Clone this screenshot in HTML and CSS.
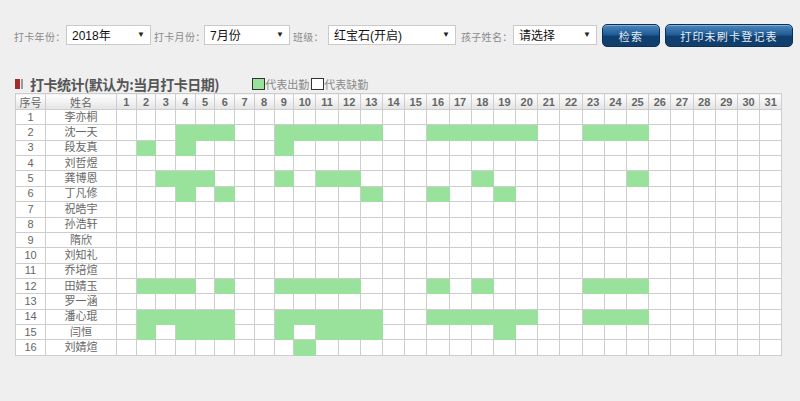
FILE: index.html
```html
<!DOCTYPE html>
<html lang="zh-CN">
<head>
<meta charset="utf-8">
<title>打卡统计</title>
<link rel="stylesheet" href="styles.css">
</head>
<body>
<div class="page">
  <form class="toolbar">
    <label class="lbl l-year">打卡年份：</label>
    <div class="select w-year"><span>2018年</span><i>▼</i></div>
    <label class="lbl l-month">打卡月份：</label>
    <div class="select w-month"><span>7月份</span><i>▼</i></div>
    <label class="lbl l-class">班级：</label>
    <div class="select w-class"><span>红宝石(开启)</span><i>▼</i></div>
    <label class="lbl l-child">孩子姓名：</label>
    <div class="select w-child"><span>请选择</span><i>▼</i></div>
    <button type="button" class="btn btn-search">检索</button>
    <button type="button" class="btn btn-print">打印未刷卡登记表</button>
  </form>

  <div class="title-bar">
    <span class="marker"><b></b><s></s></span>
    <h2 class="title">打卡统计(默认为:当月打卡日期)</h2>
    <span class="legend"><span class="box on"></span>代表出勤<span class="box off"></span>代表缺勤</span>
  </div>

  <table class="grid">
    <colgroup>
      <col class="c-no"><col class="c-name">
      <col class="c-d1"><col class="c-d1"><col class="c-d1"><col class="c-d1"><col class="c-d1"><col class="c-d1"><col class="c-d1"><col class="c-d1"><col class="c-d1">
      <col class="c-d2"><col class="c-d2"><col class="c-d2"><col class="c-d2"><col class="c-d2"><col class="c-d2"><col class="c-d2"><col class="c-d2"><col class="c-d2"><col class="c-d2"><col class="c-d2">
      <col class="c-d2"><col class="c-d2"><col class="c-d2"><col class="c-d2"><col class="c-d2"><col class="c-d2"><col class="c-d2"><col class="c-d2"><col class="c-d2"><col class="c-d2"><col class="c-d2">
    </colgroup>
    <thead>
      <tr><th class="cn">序号</th><th class="cn">姓名</th><th>1</th><th>2</th><th>3</th><th>4</th><th>5</th><th>6</th><th>7</th><th>8</th><th>9</th><th>10</th><th>11</th><th>12</th><th>13</th><th>14</th><th>15</th><th>16</th><th>17</th><th>18</th><th>19</th><th>20</th><th>21</th><th>22</th><th>23</th><th>24</th><th>25</th><th>26</th><th>27</th><th>28</th><th>29</th><th>30</th><th>31</th></tr>
    </thead>
    <tbody>
      <tr><td>1</td><td>李亦桐</td><td></td><td></td><td></td><td></td><td></td><td></td><td></td><td></td><td></td><td></td><td></td><td></td><td></td><td></td><td></td><td></td><td></td><td></td><td></td><td></td><td></td><td></td><td></td><td></td><td></td><td></td><td></td><td></td><td></td><td></td><td></td></tr>
      <tr><td>2</td><td>沈一天</td><td></td><td></td><td></td><td class="g"></td><td class="g"></td><td class="g"></td><td></td><td></td><td class="g"></td><td class="g"></td><td class="g"></td><td class="g"></td><td class="g"></td><td></td><td></td><td class="g"></td><td class="g"></td><td class="g"></td><td class="g"></td><td class="g"></td><td></td><td></td><td class="g"></td><td class="g"></td><td class="g"></td><td></td><td></td><td></td><td></td><td></td><td></td></tr>
      <tr><td>3</td><td>段友真</td><td></td><td class="g"></td><td></td><td class="g"></td><td></td><td></td><td></td><td></td><td class="g"></td><td></td><td></td><td></td><td></td><td></td><td></td><td></td><td></td><td></td><td></td><td></td><td></td><td></td><td></td><td></td><td></td><td></td><td></td><td></td><td></td><td></td><td></td></tr>
      <tr><td>4</td><td>刘哲煜</td><td></td><td></td><td></td><td></td><td></td><td></td><td></td><td></td><td></td><td></td><td></td><td></td><td></td><td></td><td></td><td></td><td></td><td></td><td></td><td></td><td></td><td></td><td></td><td></td><td></td><td></td><td></td><td></td><td></td><td></td><td></td></tr>
      <tr><td>5</td><td>龚博恩</td><td></td><td></td><td class="g"></td><td class="g"></td><td class="g"></td><td></td><td></td><td></td><td class="g"></td><td></td><td class="g"></td><td class="g"></td><td></td><td></td><td></td><td></td><td></td><td class="g"></td><td></td><td></td><td></td><td></td><td></td><td></td><td class="g"></td><td></td><td></td><td></td><td></td><td></td><td></td></tr>
      <tr><td>6</td><td>丁凡修</td><td></td><td></td><td></td><td class="g"></td><td></td><td class="g"></td><td></td><td></td><td></td><td></td><td></td><td></td><td class="g"></td><td></td><td></td><td class="g"></td><td></td><td></td><td class="g"></td><td></td><td></td><td></td><td></td><td></td><td></td><td></td><td></td><td></td><td></td><td></td><td></td></tr>
      <tr><td>7</td><td>祝皓宇</td><td></td><td></td><td></td><td></td><td></td><td></td><td></td><td></td><td></td><td></td><td></td><td></td><td></td><td></td><td></td><td></td><td></td><td></td><td></td><td></td><td></td><td></td><td></td><td></td><td></td><td></td><td></td><td></td><td></td><td></td><td></td></tr>
      <tr><td>8</td><td>孙浩轩</td><td></td><td></td><td></td><td></td><td></td><td></td><td></td><td></td><td></td><td></td><td></td><td></td><td></td><td></td><td></td><td></td><td></td><td></td><td></td><td></td><td></td><td></td><td></td><td></td><td></td><td></td><td></td><td></td><td></td><td></td><td></td></tr>
      <tr><td>9</td><td>隋欣</td><td></td><td></td><td></td><td></td><td></td><td></td><td></td><td></td><td></td><td></td><td></td><td></td><td></td><td></td><td></td><td></td><td></td><td></td><td></td><td></td><td></td><td></td><td></td><td></td><td></td><td></td><td></td><td></td><td></td><td></td><td></td></tr>
      <tr><td>10</td><td>刘知礼</td><td></td><td></td><td></td><td></td><td></td><td></td><td></td><td></td><td></td><td></td><td></td><td></td><td></td><td></td><td></td><td></td><td></td><td></td><td></td><td></td><td></td><td></td><td></td><td></td><td></td><td></td><td></td><td></td><td></td><td></td><td></td></tr>
      <tr><td>11</td><td>乔培煊</td><td></td><td></td><td></td><td></td><td></td><td></td><td></td><td></td><td></td><td></td><td></td><td></td><td></td><td></td><td></td><td></td><td></td><td></td><td></td><td></td><td></td><td></td><td></td><td></td><td></td><td></td><td></td><td></td><td></td><td></td><td></td></tr>
      <tr><td>12</td><td>田婧玉</td><td></td><td class="g"></td><td class="g"></td><td class="g"></td><td></td><td class="g"></td><td></td><td></td><td class="g"></td><td class="g"></td><td class="g"></td><td class="g"></td><td></td><td></td><td></td><td class="g"></td><td></td><td class="g"></td><td></td><td></td><td></td><td></td><td class="g"></td><td class="g"></td><td class="g"></td><td></td><td></td><td></td><td></td><td></td><td></td></tr>
      <tr><td>13</td><td>罗一涵</td><td></td><td></td><td></td><td></td><td></td><td></td><td></td><td></td><td></td><td></td><td></td><td></td><td></td><td></td><td></td><td></td><td></td><td></td><td></td><td></td><td></td><td></td><td></td><td></td><td></td><td></td><td></td><td></td><td></td><td></td><td></td></tr>
      <tr><td>14</td><td>潘心琨</td><td></td><td class="g"></td><td class="g"></td><td class="g"></td><td class="g"></td><td class="g"></td><td></td><td></td><td class="g"></td><td class="g"></td><td class="g"></td><td class="g"></td><td class="g"></td><td></td><td></td><td class="g"></td><td class="g"></td><td class="g"></td><td class="g"></td><td class="g"></td><td></td><td></td><td class="g"></td><td class="g"></td><td class="g"></td><td></td><td></td><td></td><td></td><td></td><td></td></tr>
      <tr><td>15</td><td>闫恒</td><td></td><td class="g"></td><td></td><td class="g"></td><td class="g"></td><td class="g"></td><td></td><td></td><td class="g"></td><td></td><td class="g"></td><td class="g"></td><td class="g"></td><td></td><td></td><td></td><td></td><td></td><td class="g"></td><td></td><td></td><td></td><td></td><td></td><td></td><td></td><td></td><td></td><td></td><td></td><td></td></tr>
      <tr><td>16</td><td>刘婧煊</td><td></td><td></td><td></td><td></td><td></td><td></td><td></td><td></td><td></td><td class="g"></td><td></td><td></td><td></td><td></td><td></td><td></td><td></td><td></td><td></td><td></td><td></td><td></td><td></td><td></td><td></td><td></td><td></td><td></td><td></td><td></td><td></td></tr>
    </tbody>
  </table>
</div>
</body>
</html>
```

FILE: styles.css
```css
html, body {
  margin: 0;
  padding: 0;
  background: #efefef;
  font-family: "Liberation Sans", "Noto Sans CJK SC", sans-serif;
}

.page {
  padding: 24px 0 0 14px;
}

/* ---------- toolbar ---------- */
.toolbar {
  display: flex;
  align-items: center;
  height: 23px;
}
.toolbar > * { flex-shrink: 0; }

.lbl {
  box-sizing: border-box;
  font-size: 10px;
  letter-spacing: 0.3px;
  color: #8a8a8a;
  white-space: nowrap;
  margin-top: 1px;
}
.l-year  { width: 52px; }
.l-month { width: 50px; margin-left: 3px; }
.l-class { width: 35px; margin-left: 3px; }
.l-child { width: 52px; margin-left: 5px; }

.select {
  box-sizing: border-box;
  height: 20px;
  margin-top: -2px;
  display: flex;
  align-items: center;
  justify-content: space-between;
  background: #fff;
  border: 1px solid #cacaca;
  padding: 0 5px 0 5px;
  font-size: 12px;
  color: #111;
}
.select i {
  font-style: normal;
  font-size: 8px;
  color: #222;
}
.w-year  { width: 85px; }
.w-month { width: 86px; }
.w-class { width: 128px; }
.w-child { width: 84px; }

.btn {
  box-sizing: border-box;
  height: 23px;
  border: 1px solid #0b2f57;
  border-radius: 5px;
  background: linear-gradient(#4a86c0 0%, #235d95 45%, #0f3f70 55%, #123f6c 100%);
  box-shadow: inset 0 1px 0 rgba(255,255,255,.35);
  color: #e4edf6;
  font-family: "Noto Sans CJK SC", sans-serif;
  font-size: 11px;
  letter-spacing: 1.2px;
  padding: 0;
  cursor: pointer;
}
.btn-search { width: 58px; margin-left: 5px; }
.btn-print  { width: 128px; margin-left: 5px; }

/* ---------- title ---------- */
.title-bar {
  display: flex;
  align-items: center;
  height: 18px;
  margin: 28px 0 0 1px;
}
.marker {
  display: flex;
  gap: 1px;
  margin-right: 7px;
}
.marker b {
  display: block;
  width: 5px;
  height: 10px;
  background: #a52b2b;
}
.marker s {
  display: block;
  width: 2px;
  height: 10px;
  background: #9a9a9a;
}
.title {
  margin: 0;
  font-family: "Noto Sans CJK SC", sans-serif;
  font-size: 14px;
  font-weight: bold;
  color: #555;
  letter-spacing: -0.5px;
}
.legend {
  display: flex;
  align-items: center;
  margin-left: 33px;
  font-family: "Noto Sans CJK SC", sans-serif;
  font-size: 11px;
  color: #8a8a8a;
}
.box {
  display: inline-block;
  box-sizing: border-box;
  width: 13px;
  height: 12px;
  border: 1px solid #333;
  background: #fff;
}
.box.on { background: #98e29c; }
.box.off { margin-left: 2px; }

/* ---------- grid ---------- */
.grid {
  margin-left: 1px;
  border-collapse: collapse;
  table-layout: fixed;
  width: 767px;
  background: #fff;
}
.c-no   { width: 30px; }
.c-name { width: 71px; }
.c-d1   { width: 19.7px; }
.c-d2   { width: 22.2px; }

.grid th, .grid td {
  border: 1px solid #cdcdcd;
  padding: 0;
  text-align: center;
  overflow: hidden;
  white-space: nowrap;
}
.grid thead tr { height: 16px; }
.grid th {
  background: linear-gradient(#ffffff, #e4e4e4);
  font-family: "Liberation Sans", sans-serif;
  font-weight: bold;
  font-size: 11px;
  color: #666;
  line-height: 14px;
}
.grid th.cn {
  font-family: "Noto Sans CJK SC", sans-serif;
  font-weight: normal;
  font-size: 11px;
  color: #666;
}
.grid tbody tr { height: 15.36px; }
.grid td {
  font-family: "Liberation Sans", "Noto Sans CJK SC", sans-serif;
  font-size: 11px;
  color: #666;
  line-height: 13px;
}
.grid td.g {
  background: #98e29c;
  border-color: #98e29c;
}
```
